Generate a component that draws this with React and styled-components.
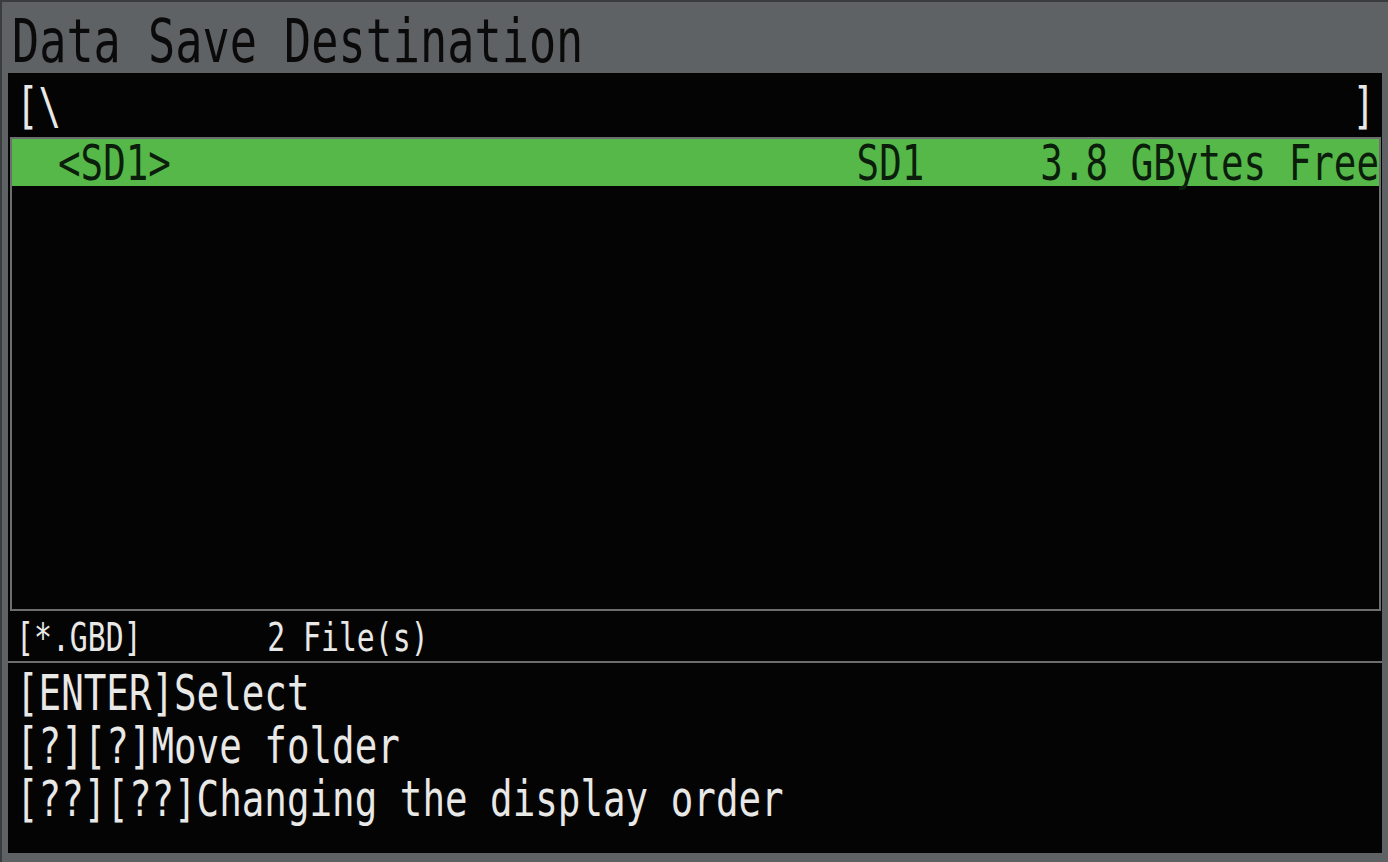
import React from "react";
import styled, { createGlobalStyle } from "styled-components";

const Global = createGlobalStyle`
  html, body { margin: 0; padding: 0; background: #5f6264; }
  body { font-family: "DejaVu Sans Mono", "Liberation Mono", monospace; }
`;

const Frame = styled.div`
  box-sizing: border-box;
  width: 1388px;
  height: 862px;
  background: #5f6264;
  border-left: 2px solid #3a3c3d;
  border-top: 2px solid #3a3c3d;
  padding: 0 6px 9px 6px;
  display: flex;
  flex-direction: column;
  overflow: hidden;
`;

const TitleBar = styled.div`
  height: 71px;
  flex: none;
  display: flex;
  align-items: center;
  padding: 8px 0 0 4px;
  box-sizing: border-box;
`;

const Glyphs = styled.span`
  display: inline-block;
  white-space: pre;
  font-family: "DejaVu Sans Mono", "Liberation Mono", monospace;
  font-size: ${(p) => p.$size}px;
  line-height: 1;
  transform: scaleY(${(p) => p.$sy || 1.32});
  transform-origin: 50% 50%;
  color: ${(p) => p.$color || "#e8e8e6"};
`;

const Screen = styled.div`
  flex: 1;
  background: #050404;
  display: flex;
  flex-direction: column;
  min-height: 0;
`;

const PathRow = styled.div`
  height: 64px;
  flex: none;
  display: flex;
  align-items: center;
  justify-content: space-between;
  padding: 4px 7px 0 8px;
  box-sizing: border-box;
`;

const ListBox = styled.div`
  flex: 1;
  margin: 0 1px 0 2px;
  border: 2px solid #6c6e70;
  display: flex;
  flex-direction: column;
  min-height: 0;
`;

const FileRow = styled.div`
  height: 47px;
  flex: none;
  display: flex;
  align-items: center;
  padding: 2px 0 0 0;
  box-sizing: border-box;
  background: ${(p) => (p.$selected ? "#55b849" : "transparent")};
`;

const NameCell = styled.div`
  flex: 1;
  padding-left: 46px;
`;

const DeviceCell = styled.div`
  flex: none;
  margin-right: 116px;
`;

const FreeCell = styled.div`
  flex: none;
`;

const StatusRow = styled.div`
  height: 50px;
  flex: none;
  display: flex;
  align-items: center;
  padding: 4px 0 0 8px;
  box-sizing: border-box;
`;

const Help = styled.div`
  height: 192px;
  flex: none;
  border-top: 2px solid #6c6e70;
  box-sizing: border-box;
  padding: 4px 0 0 8px;
`;

const HelpLine = styled.div`
  height: 53px;
  display: flex;
  align-items: center;
`;

const files = [
  { name: "<SD1>", device: "SD1", free: "3.8 GBytes Free", selected: true },
];

const helpLines = [
  "[ENTER]Select",
  "[?][?]Move folder",
  "[??][??]Changing the display order",
];

export default function App() {
  return (
    <>
      <Global />
      <Frame>
        <TitleBar>
          <Glyphs $size={45.2} $sy={1.32} $color="#0a0a0a">
            Data Save Destination
          </Glyphs>
        </TitleBar>
        <Screen>
          <PathRow>
            <Glyphs $size={37.5}>{"[\\"}</Glyphs>
            <Glyphs $size={37.5}>]</Glyphs>
          </PathRow>
          <ListBox>
            {files.map((f) => (
              <FileRow key={f.name} $selected={f.selected}>
                <NameCell>
                  <Glyphs $size={37.5} $color={f.selected ? "#0b1d0b" : undefined}>
                    {f.name}
                  </Glyphs>
                </NameCell>
                <DeviceCell>
                  <Glyphs $size={37.5} $color={f.selected ? "#0b1d0b" : undefined}>
                    {f.device}
                  </Glyphs>
                </DeviceCell>
                <FreeCell>
                  <Glyphs $size={37.5} $color={f.selected ? "#0b1d0b" : undefined}>
                    {f.free}
                  </Glyphs>
                </FreeCell>
              </FileRow>
            ))}
          </ListBox>
          <StatusRow>
            <Glyphs $size={29.8} $sy={1.34}>
              {"[*.GBD]       2 File(s)"}
            </Glyphs>
          </StatusRow>
          <Help>
            {helpLines.map((l) => (
              <HelpLine key={l}>
                <Glyphs $size={37.5}>{l}</Glyphs>
              </HelpLine>
            ))}
          </Help>
        </Screen>
      </Frame>
    </>
  );
}
